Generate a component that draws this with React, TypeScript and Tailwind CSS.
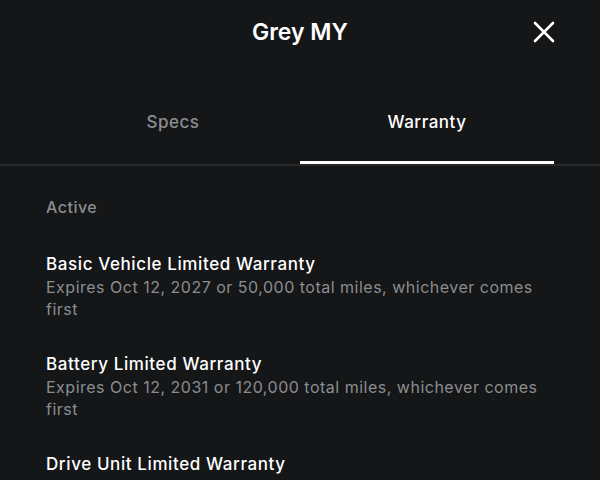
import React from "react";

const items = [
  {
    title: "Basic Vehicle Limited Warranty",
    sub: "Expires Oct 12, 2027 or 50,000 total miles, whichever comes first",
  },
  {
    title: "Battery Limited Warranty",
    sub: "Expires Oct 12, 2031 or 120,000 total miles, whichever comes first",
  },
  {
    title: "Drive Unit Limited Warranty",
    sub: "Expires Oct 12, 2031 or 120,000 total miles, whichever comes first",
  },
];

export default function App() {
  return (
    <div
      className="w-[600px] h-[480px] overflow-hidden bg-[#141618] text-white"
      style={{ fontFamily: "Inter, 'Noto Sans', sans-serif" }}
    >
      <div className="relative h-[64px] flex items-center justify-center">
        <div className="text-[23px] font-semibold tracking-[0px]">Grey MY</div>
        <button className="absolute right-[45px] top-[21px] w-[22px] h-[22px] flex items-center justify-center">
          <svg width="22" height="22" viewBox="0 0 22 22" fill="none">
            <path d="M2 2L20 20M20 2L2 20" stroke="white" strokeWidth="2.6" strokeLinecap="round" />
          </svg>
        </button>
      </div>
      <div className="border-b-2 border-[#26282a] mt-[46px]">
        <div className="flex px-[46px]">
          <div className="flex-1 flex flex-col items-center">
            <div className="text-[17px] font-medium tracking-[0.5px] text-[#8b8d8f] h-[24px] leading-[24px]">Specs</div>
            <div className="h-[3px] mt-[27px]" />
          </div>
          <div className="flex-1 flex flex-col items-center">
            <div className="text-[17px] font-medium tracking-[0.5px] text-white h-[24px] leading-[24px]">Warranty</div>
            <div className="h-[3px] w-full bg-white mt-[27px] -mb-[1px]" />
          </div>
        </div>
      </div>
      <div className="px-[46px] pt-[30px]">
        <div className="text-[16px] font-medium tracking-[0.5px] text-[#8b8d8f] leading-[22px]">Active</div>
        <div className="mt-[34px] flex flex-col gap-[32px]">
          {items.map((it) => (
            <div key={it.title}>
              <div className="text-[17px] font-medium tracking-[0.6px] leading-[24px]">{it.title}</div>
              <div className="text-[16px] tracking-[0.5px] text-[#8b8d8f] leading-[22px]">{it.sub}</div>
            </div>
          ))}
        </div>
      </div>
    </div>
  );
}
